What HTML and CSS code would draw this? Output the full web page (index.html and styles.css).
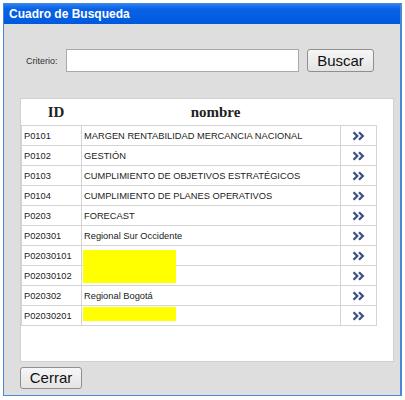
FILE: index.html
```html
<!DOCTYPE html>
<html lang="es">
<head>
<meta charset="utf-8">
<title>Cuadro de Busqueda</title>
<link rel="stylesheet" href="styles.css">
</head>
<body>
<div class="dialog">
  <div class="titlebar">Cuadro de Busqueda</div>
  <div class="content">
    <div class="search-row">
      <label class="label" for="criterio">Criterio:</label>
      <input class="input" id="criterio" type="text">
      <button class="btn btn-buscar" type="button">Buscar</button>
    </div>
    <div class="panel">
      <table class="grid">
        <colgroup><col class="c-id"><col class="c-name"><col class="c-go"></colgroup>
        <thead>
          <tr><th>ID</th><th>nombre</th><th></th></tr>
        </thead>
        <tbody>
          <tr><td>P0101</td><td>MARGEN RENTABILIDAD MERCANCIA NACIONAL</td><td class="go"><svg class="chev" viewBox="0 0 13 10"><path d="M1.5 1.2 L5.3 5 L1.5 8.8 M7 1.2 L10.8 5 L7 8.8"/></svg></td></tr>
          <tr><td>P0102</td><td>GESTIÓN</td><td class="go"><svg class="chev" viewBox="0 0 13 10"><path d="M1.5 1.2 L5.3 5 L1.5 8.8 M7 1.2 L10.8 5 L7 8.8"/></svg></td></tr>
          <tr><td>P0103</td><td>CUMPLIMIENTO DE OBJETIVOS ESTRATÉGICOS</td><td class="go"><svg class="chev" viewBox="0 0 13 10"><path d="M1.5 1.2 L5.3 5 L1.5 8.8 M7 1.2 L10.8 5 L7 8.8"/></svg></td></tr>
          <tr><td>P0104</td><td>CUMPLIMIENTO DE PLANES OPERATIVOS</td><td class="go"><svg class="chev" viewBox="0 0 13 10"><path d="M1.5 1.2 L5.3 5 L1.5 8.8 M7 1.2 L10.8 5 L7 8.8"/></svg></td></tr>
          <tr><td>P0203</td><td>FORECAST</td><td class="go"><svg class="chev" viewBox="0 0 13 10"><path d="M1.5 1.2 L5.3 5 L1.5 8.8 M7 1.2 L10.8 5 L7 8.8"/></svg></td></tr>
          <tr><td>P020301</td><td>Regional Sur Occidente</td><td class="go"><svg class="chev" viewBox="0 0 13 10"><path d="M1.5 1.2 L5.3 5 L1.5 8.8 M7 1.2 L10.8 5 L7 8.8"/></svg></td></tr>
          <tr><td>P02030101</td><td class="masked"><span class="redact redact-tall"></span>&nbsp;</td><td class="go"><svg class="chev" viewBox="0 0 13 10"><path d="M1.5 1.2 L5.3 5 L1.5 8.8 M7 1.2 L10.8 5 L7 8.8"/></svg></td></tr>
          <tr><td>P02030102</td><td>&nbsp;</td><td class="go"><svg class="chev" viewBox="0 0 13 10"><path d="M1.5 1.2 L5.3 5 L1.5 8.8 M7 1.2 L10.8 5 L7 8.8"/></svg></td></tr>
          <tr><td>P020302</td><td>Regional Bogotá</td><td class="go"><svg class="chev" viewBox="0 0 13 10"><path d="M1.5 1.2 L5.3 5 L1.5 8.8 M7 1.2 L10.8 5 L7 8.8"/></svg></td></tr>
          <tr><td>P02030201</td><td class="masked"><span class="redact redact-short"></span>&nbsp;</td><td class="go"><svg class="chev" viewBox="0 0 13 10"><path d="M1.5 1.2 L5.3 5 L1.5 8.8 M7 1.2 L10.8 5 L7 8.8"/></svg></td></tr>
        </tbody>
      </table>
    </div>
    <div class="footer">
      <button class="btn btn-cerrar" type="button">Cerrar</button>
    </div>
  </div>
</div>
</body>
</html>
```

FILE: styles.css
```css
html, body {
  margin: 0;
  padding: 0;
  background: #ffffff;
}

body {
  font-family: "Liberation Sans", Arial, sans-serif;
}

.dialog {
  box-sizing: border-box;
  margin: 3px 0 0 3px;
  width: 399px;
  height: 393px;
  border: 1px solid #4a88d6;
  border-right-width: 2px;
  background: #dedede;
  display: flex;
  flex-direction: column;
}

.titlebar {
  height: 20px;
  flex: none;
  box-sizing: border-box;
  padding: 3px 0 0 5px;
  background: linear-gradient(#2b7ff0 0%, #0a62e6 25%, #005ade 100%);
  color: #ffffff;
  font-weight: bold;
  font-size: 12px;
  line-height: 15px;
}

.content {
  flex: 1;
  min-height: 0;
  display: flex;
  flex-direction: column;
  padding: 25px 0 0 0;
}

.search-row {
  flex: none;
  display: flex;
  align-items: center;
  padding-left: 22px;
  height: 23px;
}

.label {
  font-size: 9px;
  color: #333333;
  width: 40px;
  flex: none;
}

.input {
  box-sizing: border-box;
  width: 233px;
  height: 23px;
  margin: 0;
  border: 1px solid #a9a9a9;
  background: #ffffff;
  flex: none;
}

.btn {
  box-sizing: border-box;
  margin: 0;
  padding: 0;
  height: 23px;
  font-family: "Liberation Sans", Arial, sans-serif;
  font-size: 15px;
  color: #111111;
  border: 1px solid #8f8f8f;
  border-radius: 3px;
  background: linear-gradient(#f6f6f6, #e4e4e4);
  line-height: 20px;
}

.btn-buscar {
  width: 67px;
  margin-left: 8px;
}

.panel {
  flex: none;
  display: block;
  box-sizing: border-box;
  margin: 26px 0 0 16px;
  width: 374px;
  height: 264px;
  background: #ffffff;
  border: 1px solid #d0d0d0;
  padding: 0;
}

.grid {
  border-collapse: collapse;
  width: 355px;
  table-layout: fixed;
  font-size: 9.3px;
  color: #222222;
  background: #ffffff;
}

.c-id { width: 60px; }
.c-name { width: 259px; }
.c-go { width: 36px; }

.grid th {
  height: 26px;
  padding: 0 0 0 9px;
  font-family: "Liberation Serif", "Times New Roman", serif;
  font-size: 15px;
  font-weight: bold;
  color: #222222;
  text-align: center;
  vertical-align: middle;
}

.grid td {
  height: 19px;
  padding: 0 0 0 2px;
  border: 1px solid #d4d4d4;
  vertical-align: middle;
  white-space: nowrap;
  overflow: visible;
}

.grid td.go {
  text-align: center;
  padding: 0;
}

.chev {
  display: block;
  width: 13px;
  height: 10px;
  margin: 0 auto;
  fill: none;
  stroke: #3c5283;
  stroke-width: 2.3;
}

.masked {
  position: relative;
}

.redact {
  position: absolute;
  left: 1px;
  width: 93px;
  background: #ffff00;
  z-index: 1;
}

.redact-tall {
  top: 4px;
  height: 33px;
}

.redact-short {
  top: 1px;
  height: 14px;
}

.footer {
  flex: none;
  padding: 5px 0 0 16px;
}

.btn-cerrar {
  width: 62px;
  height: 22px;
}
```
